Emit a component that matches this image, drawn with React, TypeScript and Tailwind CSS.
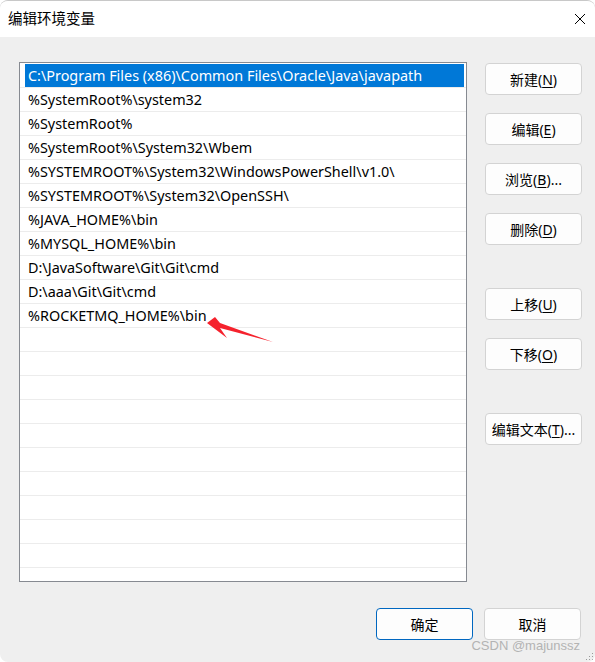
import React from 'react';

const paths = [
  'C:\\Program Files (x86)\\Common Files\\Oracle\\Java\\javapath',
  '%SystemRoot%\\system32',
  '%SystemRoot%',
  '%SystemRoot%\\System32\\Wbem',
  '%SYSTEMROOT%\\System32\\WindowsPowerShell\\v1.0\\',
  '%SYSTEMROOT%\\System32\\OpenSSH\\',
  '%JAVA_HOME%\\bin',
  '%MYSQL_HOME%\\bin',
  'D:\\JavaSoftware\\Git\\Git\\cmd',
  'D:\\aaa\\Git\\Git\\cmd',
  '%ROCKETMQ_HOME%\\bin',
];

const rows = [...paths, ...Array(11).fill('')];

const Btn: React.FC<{ label: string; hot?: string; tail?: string; primary?: boolean }> = ({
  label,
  hot,
  tail = '',
  primary,
}) => (
  <button
    className={
      'w-[97px] h-[32px] rounded-[4px] bg-[#fdfdfd] text-[14px] text-black flex items-center justify-center ' +
      (primary ? 'border border-[#0067c0]' : 'border border-[#d3d3d3]')
    }
  >
    {label}
    {hot && (
      <>
        (<span className="underline underline-offset-2">{hot}</span>){tail}
      </>
    )}
  </button>
);

export default function App() {
  return (
    <div
      className="relative w-[595px] h-[662px] bg-[#efefef] rounded-[8px] border-t border-[#c8c8c8] overflow-hidden"
      style={{ fontFamily: '"Noto Sans", "Noto Sans CJK SC", sans-serif' }}
    >
      {/* title bar */}
      <div className="h-[36px] bg-white flex items-center justify-between pl-[8px] pr-[9px]">
        <span className="text-[14.5px] text-black">编辑环境变量</span>
        <svg width="12" height="12" viewBox="0 0 12 12" className="text-black">
          <path d="M1 1 L11 11 M11 1 L1 11" stroke="currentColor" strokeWidth="1" />
        </svg>
      </div>

      <div className="flex pl-[19px] pt-[25px]">
        {/* list */}
        <div className="w-[448px] h-[520px] border border-[#868a91] bg-white overflow-hidden pt-[1px]">
          {rows.map((r, i) => (
            <div key={i} className="h-[24px] border-b border-[#ececec] pl-[5px] pr-[2px]">
              <div
                className={
                  'h-[23px] flex items-center pl-[3px] text-[14.4px] whitespace-nowrap ' +
                  (i === 0 ? 'bg-[#0078d7] text-white' : 'text-black')
                }
              >
                {r}
              </div>
            </div>
          ))}
        </div>

        {/* side buttons */}
        <div className="flex flex-col ml-[18px] pt-[1px]">
          <div className="flex flex-col gap-[18px]">
            <Btn label="新建" hot="N" />
            <Btn label="编辑" hot="E" />
            <Btn label="浏览" hot="B" tail="..." />
            <Btn label="删除" hot="D" />
          </div>
          <div className="flex flex-col gap-[18px] mt-[43px]">
            <Btn label="上移" hot="U" />
            <Btn label="下移" hot="O" />
          </div>
          <div className="mt-[43px]">
            <Btn label="编辑文本" hot="T" tail="..." />
          </div>
        </div>
      </div>

      {/* bottom buttons */}
      <div className="flex justify-end gap-[11px] pr-[14px] mt-[26px]">
        <Btn label="确定" primary />
        <Btn label="取消" />
      </div>

      {/* watermark */}
      <div
        className="absolute right-[15px] top-[635px] text-[13px] text-[#b3b3b3]"
        style={{ fontFamily: '"Liberation Sans", Arial, sans-serif' }}
      >
        CSDN @majunssz
      </div>

      {/* resize grip */}
      <svg className="absolute right-[1px] bottom-[1px]" width="8" height="8" viewBox="0 0 8 8">
        <rect x="6" y="0" width="1" height="1" fill="#9a9a9a" />
        <rect x="3" y="3" width="1" height="1" fill="#9a9a9a" />
        <rect x="6" y="3" width="1" height="1" fill="#9a9a9a" />
        <rect x="0" y="6" width="1" height="1" fill="#9a9a9a" />
        <rect x="3" y="6" width="1" height="1" fill="#9a9a9a" />
        <rect x="6" y="6" width="1" height="1" fill="#9a9a9a" />
      </svg>

      {/* red arrow annotation */}
      <svg className="absolute left-0 top-0 pointer-events-none" width="595" height="662">
        <polygon
          points="207,322 215,316 220,322 273,341 220,327 227,337"
          fill="#f5222d"
        />
      </svg>
    </div>
  );
}
